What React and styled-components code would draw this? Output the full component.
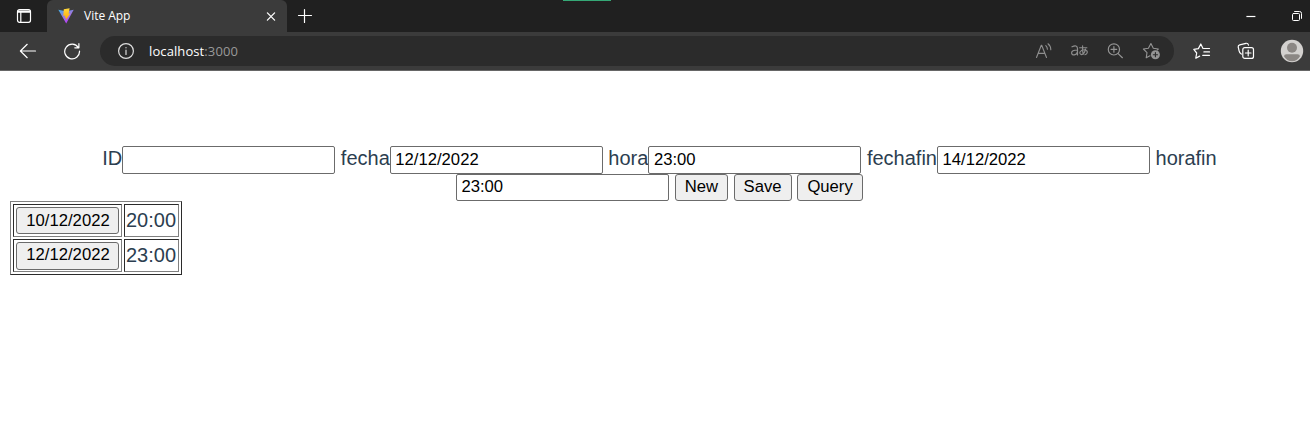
import React from "react";
import styled, { createGlobalStyle } from "styled-components";

const GlobalStyle = createGlobalStyle`
  * { box-sizing: border-box; }
  html, body { margin: 0; background: #fff; overflow: hidden; }
`;

const Window = styled.div`
  width: 1310px;
  height: 435px;
  overflow: hidden;
  background: #fff;
  font-family: "Liberation Sans", Arial, sans-serif;
`;

const TabStrip = styled.header`
  position: relative;
  display: flex;
  height: 32px;
  background: #202020;
`;

const Accent = styled.span`
  position: absolute;
  top: 0;
  left: 563px;
  width: 48px;
  height: 1px;
  background: #35a876;
`;

const Slot = styled.span`
  display: flex;
  align-items: center;
  justify-content: center;
  flex: none;
  width: ${(p) => p.$w}px;
  height: 32px;
`;

const Tab = styled.div`
  display: flex;
  align-items: center;
  width: 240px;
  height: 32px;
  padding: 0 10px 0 11px;
  background: #3b3b3b;
  border-radius: 6px 6px 0 0;
`;

const TabTitle = styled.span`
  flex: 1;
  margin-left: 10px;
  font: 12px/16px "Open Sans", "Noto Sans", sans-serif;
  letter-spacing: -0.02px;
  color: #fff;
`;

const WindowControls = styled.div`
  display: flex;
  margin-left: auto;
  margin-right: -10px;
`;

const Toolbar = styled.nav`
  display: flex;
  align-items: center;
  height: 39px;
  padding: 0 0 1px;
  background: #3b3b3b;
  border-bottom: 1px solid #666;
`;

const AddressBar = styled.div`
  display: flex;
  align-items: center;
  flex: none;
  width: 1074px;
  height: 30px;
  padding-left: 17px;
  background: #2b2b2b;
  border-radius: 15px;
`;

const Address = styled.span`
  margin-left: 14px;
  font: 13px/18px "Open Sans", "Noto Sans", sans-serif;
  letter-spacing: 0.1px;
  color: #fff;
`;

const Port = styled.span`
  color: #999;
`;

const AddressTools = styled.div`
  display: flex;
  margin-left: auto;
  padding-right: 4px;
`;

const Page = styled.main`
  padding: 75px 10px 0;
  color: #2c3e50;
  font-size: 20px;
`;

const FormRow = styled.div`
  display: flex;
  justify-content: center;
  gap: 5.56px;
  height: ${(p) => p.$h}px;
  padding-left: ${(p) => p.$indent}px;
`;

const Field = styled.label`
  display: flex;
  line-height: 24px;
`;

const TextInput = styled.input`
  width: 213px;
  height: ${(p) => p.$h || 28}px;
  margin: 0;
  padding: 1px 4px ${(p) => (p.$h ? "3px 4px" : "2px 4.5px")};
  border: 1px solid #6b6b6b;
  border-radius: 2px;
  background: #fff;
  color: #000;
  font: 16.67px "Liberation Sans", Arial, sans-serif;
  outline: none;
`;

const Button = styled.button`
  width: ${(p) => p.$w}px;
  height: 27px;
  margin: 0;
  padding: 0 0 2px;
  border: 1px solid #6b6b6b;
  border-radius: 3px;
  background: #efefef;
  color: #000;
  font: 16.67px "Liberation Sans", Arial, sans-serif;
`;

const DateButton = styled(Button)`
  display: block;
  height: ${(p) => p.$h}px;
  padding: 0 0 ${(p) => (p.$h > 27 ? 3 : 0)}px 1px;
`;

const Table = styled.table`
  width: 172px;
  height: 74px;
  border: 1px solid;
  border-color: #808080 #2b2b2b #2b2b2b #808080;
  border-spacing: 2px;
  table-layout: fixed;
`;

const Cell = styled.td`
  width: ${(p) => p.$w}px;
  height: 33px;
  padding: ${(p) => (p.$text ? "0 0 2px 1px" : "2px 2px 1px")};
  border: 1px solid;
  border-color: #2b2b2b #808080 #808080 #2b2b2b;
  font-size: 20px;
  line-height: ${(p) => (p.$text ? "24px" : "0")};
  vertical-align: ${(p) => (p.$text ? "middle" : "top")};
`;

const Icon = ({ w = 18, h = w, color = "#fff", sw = 1.2, children }) => (
  <svg width={w} height={h} viewBox={`0 0 ${w} ${h}`} fill="none" stroke={color} strokeWidth={sw} strokeLinecap="round" strokeLinejoin="round">
    {children}
  </svg>
);

const TabActionsIcon = () => (
  <Icon w={16}>
    <rect x="1.5" y="1.7" width="13" height="12.6" rx="2" />
    <path d="M1.8 4.2H14.2M4.8 4.5V14M2 3.1H14" />
  </Icon>
);

const ViteIcon = () => (
  <svg width="16" height="16" viewBox="0 0 16 16">
    <defs>
      <linearGradient id="shield" x1="0" y1="0" x2="0.6" y2="1">
        <stop offset="0" stopColor="#41b1e8" />
        <stop offset="0.55" stopColor="#9b78e0" />
        <stop offset="1" stopColor="#bd34fe" />
      </linearGradient>
      <linearGradient id="bolt" x1="0" y1="0" x2="0" y2="1">
        <stop offset="0" stopColor="#ffd83e" />
        <stop offset="1" stopColor="#ffa800" />
      </linearGradient>
    </defs>
    <path d="M.3 1.8 8 3.2 15.7 1.8 8.2 15.6Z" fill="url(#shield)" />
    <path d="M11.6.2 5.8 1.3 5.3 8 7.3 7.6 6.8 9.9 8.2 9.5 7.7 12.3 12.3 5.4 10.6 5.7Z" fill="url(#bolt)" />
  </svg>
);

const BackIcon = () => (
  <Icon w={18}><path d="M16.5 9H1.5M8.2 2.3 1.4 9l6.8 6.7" /></Icon>
);

const ReloadIcon = () => (
  <Icon w={18} sw={1.2}><path d="M15.4 5.6A7.4 7.4 0 1 0 16.5 9M15.9 1.7v4.1h-4.1" /></Icon>
);

const InfoIcon = () => (
  <Icon w={18} color="#ddd"><circle cx="9" cy="9" r="7.4" /><path d="M9 8.2v4.2M9 5.6v.2" /></Icon>
);

const ReadAloudIcon = () => (
  <Icon w={18} color="#8e8e8e" sw={1.1}>
    <path d="M1.5 15.5 6.3 3.2h.4l4.8 12.3M3.2 11.4h6.7M10.8 3.6q1.6 1.4 1.6 3.6M13 1.8q2.8 2.2 2.8 6" />
  </Icon>
);

const TranslateIcon = () => (
  <Icon w={18} color="#8e8e8e" sw={1.2}>
    <path d="M1 4.8Q6.2 2.4 6.5 6.6v6.3M6.4 8Q.6 8 .6 10.9q.2 2.3 2.7 2 2.8-.5 3.1-3" />
    <path d="M8.6 5.7h7.3M11.6 3.8q-.3 5 .6 8.7M14.6 7.1q-1.2 5-4.1 5.5-2.3-.6-1.4-2.8 1.4-2 4.3-2 3 .2 2.9 2.6-.2 1.8-2.4 2.4" strokeWidth="1.1" />
  </Icon>
);

const ZoomIcon = () => (
  <Icon w={18} color="#949494">
    <circle cx="6.9" cy="7.4" r="5.6" /><path d="m11.1 11.6 4.3 4.1M4.1 7.4h5.6M6.9 4.6v5.6" />
  </Icon>
);

const AddFavoriteIcon = () => (
  <Icon w={20} color="#949494" sw={1.1}>
    <path d="M8 14.8 4.2 16.8l.8-5.2L1.4 8l5-.8L8.9 2.5l2.4 4.7 5 .8-1 1" />
    <circle cx="13.4" cy="13.7" r="4.5" fill="#949494" stroke="none" />
    <path d="M11.3 13.7h4.2M13.4 11.6v4.2" stroke="#2b2b2b" />
  </Icon>
);

const FavoritesIcon = () => (
  <Icon w={18}>
    <path d="M6.6 14.1 2.8 16.2l.9-5.2L.8 7.4l4.6-.8 2.4-4.6 2.2 4.4M10.9 6.5h5.6M10.9 9.9h5.6M9.7 13.3h6.8" />
  </Icon>
);

const CollectionsIcon = () => (
  <Icon w={18}>
    <path d="M4.3 12.1Q2.4 10.8 2.1 8.9L1.2 5Q1 3.2 2.7 2.8L9 1.3q1.9-.3 2.5 1.8" />
    <rect x="5.8" y="5.7" width="10.7" height="10.7" rx="2" />
    <path d="M8.4 11h5.6M11.2 8.2v5.6" />
  </Icon>
);

const ProfileIcon = () => (
  <svg width="24" height="24" viewBox="0 0 24 24">
    <circle cx="12" cy="12" r="11.2" fill="#d3d1cf" />
    <circle cx="12" cy="8.8" r="5" fill="#8b8784" />
    <path d="M4 17.2q.2-2 2.4-2h11.2q2.2 0 2.4 2-2.8 5-8 5t-8-5Z" fill="#8b8784" />
  </svg>
);

const fields = [
  { label: "ID", value: "" },
  { label: "fecha", value: "12/12/2022" },
  { label: "hora", value: "23:00" },
  { label: "fechafin", value: "14/12/2022" },
];

const rows = [
  { date: "10/12/2022", time: "20:00", height: 27 },
  { date: "12/12/2022", time: "23:00", height: 28 },
];

export default function App() {
  return (
    <Window>
      <GlobalStyle />
      <TabStrip>
        <Accent />
        <Slot $w={47}><TabActionsIcon /></Slot>
        <Tab>
          <ViteIcon />
          <TabTitle>Vite App</TabTitle>
          <Icon w={12} sw={1.3}><path d="m2.4 2.9 7.2 7.2M9.6 2.9l-7.2 7.2" /></Icon>
        </Tab>
        <Slot $w={36}><Icon w={16}><path d="M1.5 7.5h13M7.5 1.5v13" /></Icon></Slot>
        <WindowControls>
          <Slot $w={46}><Icon w={12}><path d="M1.4 6.5h9" strokeLinecap="butt" /></Icon></Slot>
          <Slot $w={46}>
            <Icon w={12} sw={1}><rect x="1.5" y="3.5" width="7" height="7" rx="1" /><path d="M3.6 1.5h5q1.9 0 1.9 1.9v5" /></Icon>
          </Slot>
        </WindowControls>
      </TabStrip>
      <Toolbar>
        <Slot $w={56}><BackIcon /></Slot>
        <Slot $w={32}><ReloadIcon /></Slot>
        <Slot $w={12} />
        <AddressBar>
          <InfoIcon />
          <Address>localhost<Port>:3000</Port></Address>
          <AddressTools>
            <Slot $w={36}><ReadAloudIcon /></Slot>
            <Slot $w={36}><TranslateIcon /></Slot>
            <Slot $w={36}><ZoomIcon /></Slot>
            <Slot $w={36}><AddFavoriteIcon /></Slot>
          </AddressTools>
        </AddressBar>
        <Slot $w={56}><FavoritesIcon /></Slot>
        <Slot $w={32}><CollectionsIcon /></Slot>
        <Slot $w={60}><ProfileIcon /></Slot>
      </Toolbar>
      <Page>
        <FormRow $h={28} $indent={9}>
          {fields.map((f) => (
            <Field key={f.label}>
              {f.label}
              <TextInput defaultValue={f.value} />
            </Field>
          ))}
          <Field>horafin</Field>
        </FormRow>
        <FormRow $h={27} $indent={9.5}>
          <TextInput $h={27} defaultValue="23:00" />
          <Button $w={53}>New</Button>
          <Button $w={58}>Save</Button>
          <Button $w={66}>Query</Button>
        </FormRow>
        <Table>
          <tbody>
            {rows.map(({ date, time, height }) => (
              <tr key={date}>
                <Cell $w={109}><DateButton $w={103} $h={height}>{date}</DateButton></Cell>
                <Cell $w={55} $text>{time}</Cell>
              </tr>
            ))}
          </tbody>
        </Table>
      </Page>
    </Window>
  );
}
